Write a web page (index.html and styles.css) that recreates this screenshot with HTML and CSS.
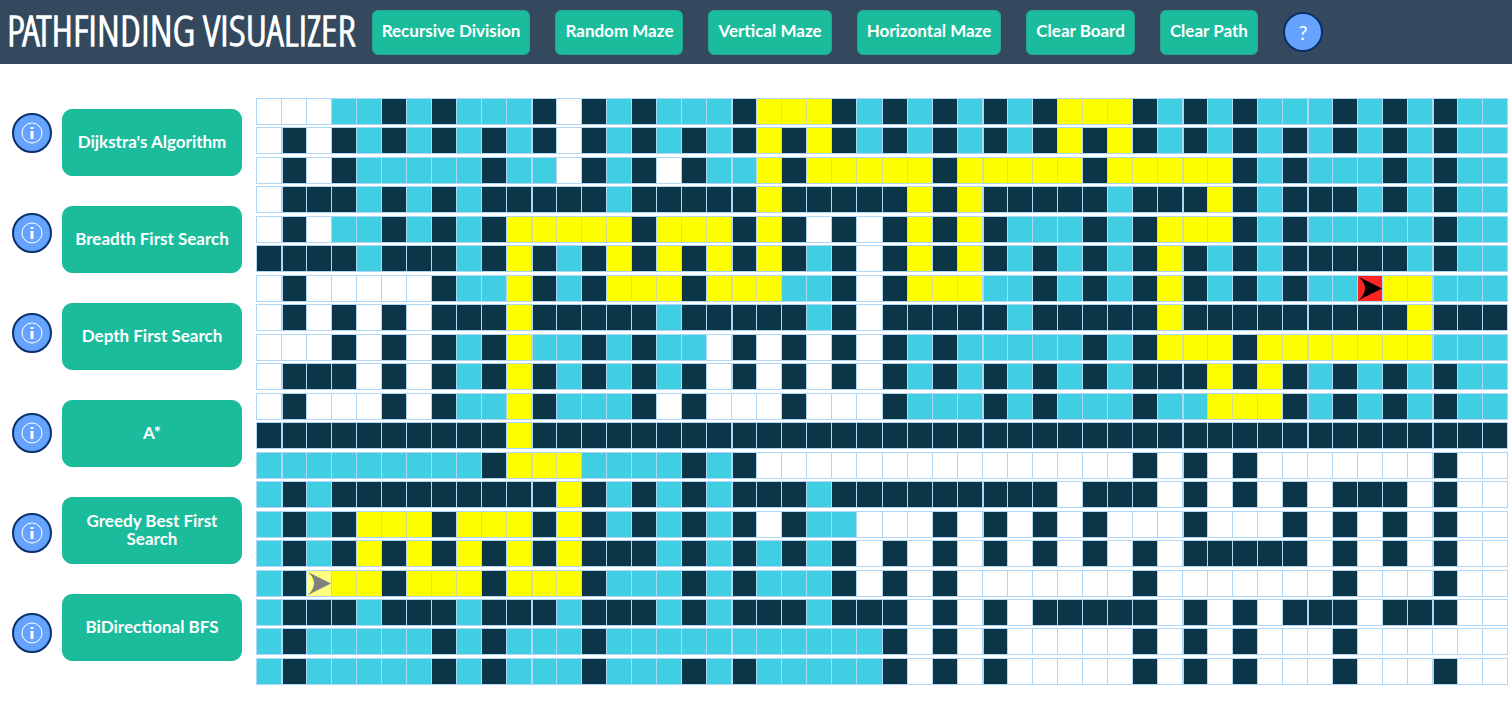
FILE: index.html
```html
<!DOCTYPE html>
<html lang="en">
<head>
<meta charset="utf-8">
<title>Pathfinding Visualizer</title>
<link rel="stylesheet" href="styles.css">
</head>
<body>
<header class="topbar">
  <h1 class="title">PATHFINDING VISUALIZER</h1>
  <nav class="actions">
    <button class="btn">Recursive Division</button>
    <button class="btn">Random Maze</button>
    <button class="btn">Vertical Maze</button>
    <button class="btn">Horizontal Maze</button>
    <button class="btn">Clear Board</button>
    <button class="btn">Clear Path</button>
    <button class="round">?</button>
  </nav>
</header>
<main class="layout">
  <div class="infos">
    <button class="round" aria-label="About Dijkstra's Algorithm"><svg class="info" viewBox="0 0 22 22"><circle cx="11" cy="11" r="10"/><path d="M11 9v8M11 5v2"/></svg></button>
    <button class="round" aria-label="About Breadth First Search"><svg class="info" viewBox="0 0 22 22"><circle cx="11" cy="11" r="10"/><path d="M11 9v8M11 5v2"/></svg></button>
    <button class="round" aria-label="About Depth First Search"><svg class="info" viewBox="0 0 22 22"><circle cx="11" cy="11" r="10"/><path d="M11 9v8M11 5v2"/></svg></button>
    <button class="round" aria-label="About A*"><svg class="info" viewBox="0 0 22 22"><circle cx="11" cy="11" r="10"/><path d="M11 9v8M11 5v2"/></svg></button>
    <button class="round" aria-label="About Greedy Best First Search"><svg class="info" viewBox="0 0 22 22"><circle cx="11" cy="11" r="10"/><path d="M11 9v8M11 5v2"/></svg></button>
    <button class="round" aria-label="About BiDirectional BFS"><svg class="info" viewBox="0 0 22 22"><circle cx="11" cy="11" r="10"/><path d="M11 9v8M11 5v2"/></svg></button>
  </div>
  <div class="algorithms">
    <button class="btn btn-large">Dijkstra's Algorithm</button>
    <button class="btn btn-large">Breadth First Search</button>
    <button class="btn btn-large">Depth First Search</button>
    <button class="btn btn-large">A*</button>
    <button class="btn btn-large">Greedy Best First Search</button>
    <button class="btn btn-large">BiDirectional BFS</button>
  </div>
  <div class="board" id="board"></div>
</main>
<script src="board.js"></script>
</body>
</html>
```
FILE: styles.css
```css
* { box-sizing: border-box; }
body { margin: 0; background: #fff; font-family: Lato, Carlito, "Open Sans", sans-serif; }
.topbar { display: flex; align-items: center; height: 64px; padding-left: 7px; background: #34495e; }
.title { margin: 0; padding-bottom: 4px; color: #fff; font-family: "Open Sans Condensed Light", "Noto Sans ExtraCondensed", "Noto Sans Condensed", "Liberation Sans Narrow", sans-serif; font-size: 43px; font-weight: 700; line-height: 48px; white-space: nowrap; }
.actions { display: flex; align-items: center; gap: 25px; margin-left: 16px; }
.btn { height: 45px; padding: 0 9px 2px; border: 1px solid #2aa58f; border-radius: 6px; background: #1abc9c; color: #fff; font-family: inherit; font-size: 17px; font-weight: 700; line-height: 18px; white-space: nowrap; }
.round { display: flex; align-items: center; justify-content: center; width: 40px; height: 40px; padding: 0; border: 2px solid #08306b; border-radius: 50%; background: #66a3ff; color: #fff; font-family: inherit; font-size: 20px; }
.info { width: 22px; height: 22px; fill: none; stroke: #fff; }
.info path { stroke-width: 3; }
.layout { display: flex; align-items: flex-start; padding: 34px 4px 39px 12px; }
.infos { display: flex; flex-direction: column; gap: 60px; padding-top: 15px; margin-right: 10px; }
.algorithms { display: flex; flex-direction: column; gap: 30px; padding-top: 11px; margin-right: 14px; }
.btn-large { width: 180px; height: 67px; border-color: #1abc9c; border-radius: 10px; white-space: normal; }
.board { flex: 1; display: flex; flex-direction: column; justify-content: space-between; height: 587px; }
.row { display: grid; grid-template-columns: repeat(50, 1fr); height: 27px; border: 1px solid #afd8f8; border-left: 0; }
.cell { border-left: 1px solid #afd8f8; }
.wide { border-left-width: 2px; }
.wall { background: #0c3547; }
.visited { background: #40cee3; }
.path { background: #ff0; }
.path + .path { border-left-color: #d3dc92; }
.start { background: #ffff80; fill: #808080; }
.target { background: #ff2424; fill: #000; }
.arrow { display: block; width: 100%; height: 25px; }
```
FILE: board.js
```js
const rows = [
  "...vv#v#vvv#.#v#vvv#yyy#v#v#v#v#yyy#v#v#vvv#v#v#vv",
  ".#.#v#v#v#v#.#v#v#v#y#y#v#v#v#v#y#y#v#v#v#v#v#v#vv",
  ".#.#vvvvv#vv.#v#.#vvy#yyyyy#yyyyy#yyyyy#v#vvv#v#vv",
  ".###v#v#v#####v#####y#####y#y#####v###y#v###v#v#vv",
  ".#.vv#v#v#yyyyy#yyy#y#.#.#y#y#vvv#v#yyy#v#vvvvv#vv",
  "####v###v#y#v#y#y#y#y#v#.#y#y#v#v#v#y#v#v#####v#vv",
  ".#.....#vvy#v#yyy#yyyvv#.#yyyvv#v#v#y#v#v#vvTyyvvv",
  ".#.#.#.###y#####v#####v#.#####v#####y#########y###",
  "...#.#.#v#yvv#v#vv.#.#.#.#v#vvvvv#v#yyy#yyyyyyyvvv",
  ".###.#.#v#y#v#v#v#.#.#.#.#v#v#v#v#v###y#y#v#v#v#vv",
  ".#...#.#vvy#vvv#.#...#...#vvv#v#vvv#vvyyy#v#v#v#vv",
  "##########y#######################################",
  "vvvvvvvvv#yyyvvvv#v#...............#.#.#.......#..",
  "v#v#########y#v#v#v###v#########.###.#.#.#.###.#..",
  "v#v#yyy#yyy#y#v#v#v#.#vv...#.#.#.#...#...#.#.#.#..",
  "v#v#y#y#y#y#y###v#v#v#v#.#.#.#.#.#.#.#####.#.#.#..",
  "v#Syy#yyy#yyy#vvv#v#vvv#.#.#.......#.......#...#..",
  "v###v###v###v###v#v###v###.#.#.#####.#.#.###.###..",
  "v#vvvvv#v#vvv#vvvvvvvvvvv#.#.#.....#.#.#...#......",
  "v#vvvvv#v#vvv#vvv#v#vvvvv#.#.#.....#.#.#...#...#.."
];
const kinds = { "#": "wall", v: "visited", y: "path", S: "start", T: "target" };
const wideColumns = [1, 11, 19, 29, 37, 42, 47];
const arrow = '<svg class="arrow" viewBox="0 0 24 25"><path d="M1 1L24 12.500L1 24Q13 12.500 1 1Z"/></svg>';

document.getElementById("board").innerHTML = rows.map(row =>
  '<div class="row">' + [...row].map((code, column) => {
    const wide = code !== "." && wideColumns.includes(column) ? " wide" : "";
    return `<div class="cell ${kinds[code] || ""}${wide}">${code === "S" || code === "T" ? arrow : ""}</div>`;
  }).join("") + "</div>"
).join("");
```
